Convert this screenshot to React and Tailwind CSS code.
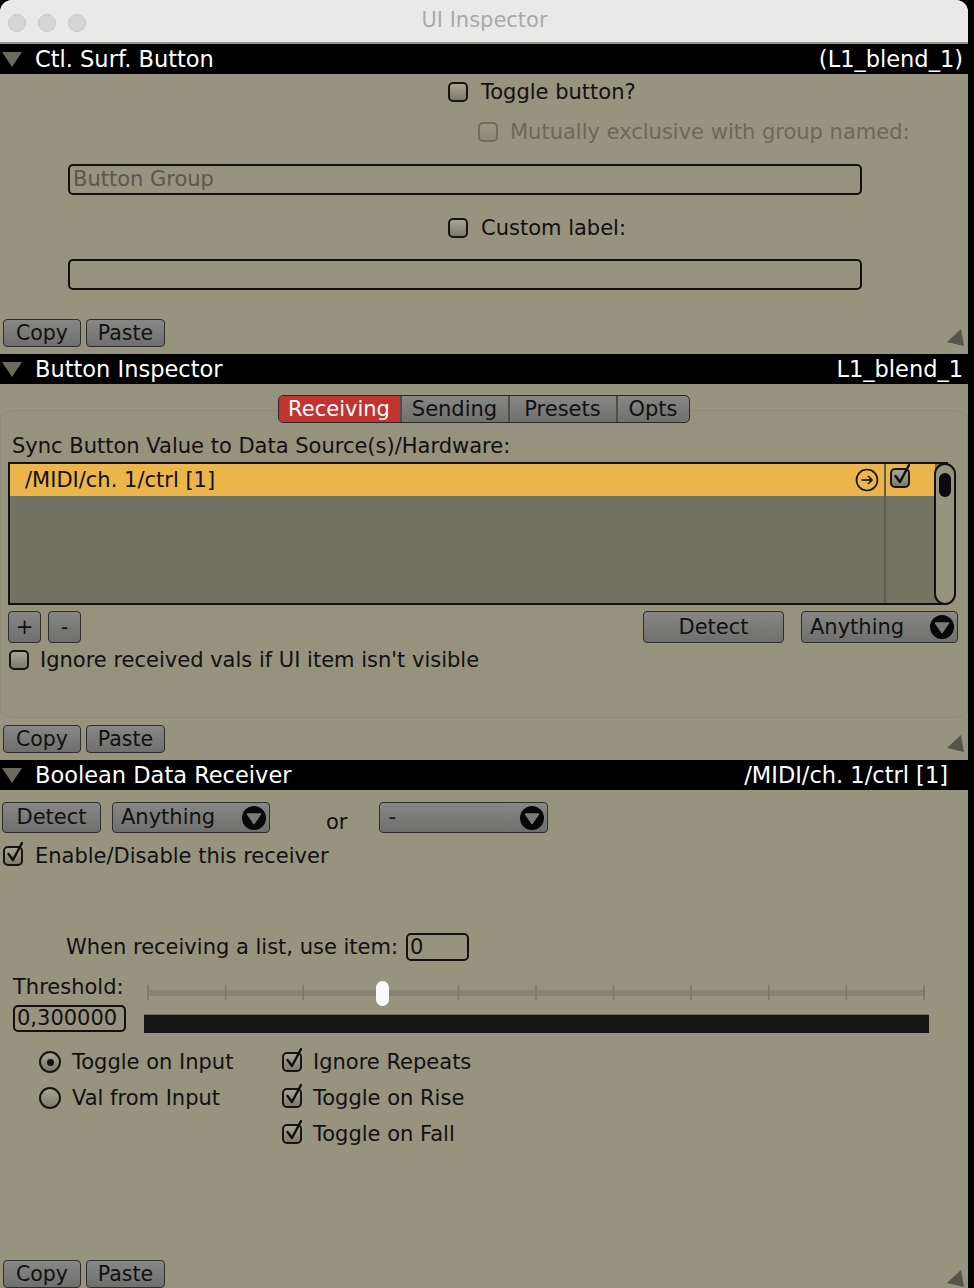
import React from "react";

const ticks = [0, 1, 2, 3, 4, 5, 6, 7, 8, 9, 10];

function Disclosure() {
  return (
    <svg width="20" height="16" viewBox="0 0 20 16" className="shrink-0">
      <polygon points="0,1 20,1 10,16" fill="#6b6a5d" />
    </svg>
  );
}

function Header({ title, right, last }) {
  return (
    <div className="flex h-[30px] shrink-0 items-center bg-black pl-[2px] text-[22.5px] leading-none text-white">
      <Disclosure />
      <span className="ml-[13px]">{title}</span>
      <span className={last ? "ml-auto pr-[20px]" : "ml-auto pr-[5px]"}>{right}</span>
    </div>
  );
}

function Grip() {
  return (
    <svg width="19" height="19" viewBox="0 0 19 19" className="shrink-0">
      <polygon points="15,1 1,14 18,18" fill="#56554a" />
    </svg>
  );
}

function Btn({ className = "", children, between }) {
  return (
    <div
      className={
        "flex items-center rounded-[4px] border-[1.5px] border-[#2e2e2c] bg-linear-to-b from-[#878785] to-[#6f6f6d] leading-none text-[#111] " +
        (between ? "justify-between " : "justify-center ") +
        className
      }
    >
      {children}
    </div>
  );
}

function CopyRow() {
  return (
    <div className="flex items-end justify-between pl-[3px] pr-[3px] text-[20.5px]">
      <div className="flex gap-[5px]">
        <Btn className="h-[28px] w-[78px]">Copy</Btn>
        <Btn className="h-[28px] w-[79px]">Paste</Btn>
      </div>
      <Grip />
    </div>
  );
}

function DropIcon() {
  return (
    <svg width="24" height="24" viewBox="0 0 24 24" className="shrink-0">
      <circle cx="12" cy="12" r="12" fill="#080808" />
      <polygon points="5.5,8 18.5,8 12,17.5" fill="#7a7a78" stroke="#7a7a78" strokeWidth="1.5" strokeLinejoin="round" />
    </svg>
  );
}

function Dropdown({ label, className = "" }) {
  return (
    <Btn between className={"pl-[8px] pr-[3px] " + className}>
      <span>{label}</span>
      <DropIcon />
    </Btn>
  );
}

function Check({ checked, disabled }) {
  return (
    <div
      className={
        "relative h-[20px] w-[20px] shrink-0 rounded-[5px] border-2 bg-linear-to-b " +
        (disabled ? "border-[#6e6c5e] from-[#9a9784] to-[#8b8876]" : "border-[#151515] from-[#a8a593] to-[#7e7b6a]")
      }
    >
      {checked && (
        <svg width="24" height="26" viewBox="0 0 24 26" className="absolute left-[-1px] top-[-7px] overflow-visible">
          <polyline points="4.5,13 9,19 18,2" fill="none" stroke="#0d0d0d" strokeWidth="2.4" strokeLinecap="round" strokeLinejoin="round" />
        </svg>
      )}
    </div>
  );
}

function Radio({ on }) {
  return (
    <div className="flex h-[22px] w-[22px] shrink-0 items-center justify-center rounded-full border-2 border-[#151515] bg-linear-to-b from-[#a8a593] to-[#7e7b6a]">
      {on && <div className="h-[7px] w-[7px] rounded-full bg-[#111]" />}
    </div>
  );
}

function CircleArrow() {
  return (
    <svg width="24" height="24" viewBox="0 0 24 24" className="shrink-0">
      <circle cx="12" cy="12" r="10.5" fill="none" stroke="#111" strokeWidth="1.6" />
      <line x1="6.5" y1="12" x2="17" y2="12" stroke="#111" strokeWidth="1.6" />
      <polyline points="13,8 17,12 13,16" fill="none" stroke="#111" strokeWidth="1.6" />
    </svg>
  );
}

function Slider() {
  return (
    <svg width="785" height="34" viewBox="0 0 785 34" className="block">
      <rect x="4" y="14" width="777" height="6" fill="#86836f" />
      {ticks.map((i) => (
        <rect key={i} x={4 + i * 77.6 - 0.75} y="9" width="1.5" height="15" fill="#7a7767" />
      ))}
      <rect x="232" y="5" width="13" height="25" rx="6.5" fill="#fafafa" />
    </svg>
  );
}

export default function App() {
  return (
    <div className="h-[1288px] w-[974px] overflow-hidden bg-black font-['DejaVu_Sans',Verdana,sans-serif] text-[#111]">
      <div className="flex h-full w-[968px] flex-col overflow-hidden rounded-t-[12px] bg-[#96937e]">
        {/* title bar */}
        <div className="relative flex h-[42px] shrink-0 items-center justify-center bg-[#e9e9e9]">
          <div className="absolute left-[8px] top-[14px] flex gap-[12px]">
            <div className="h-[18px] w-[18px] rounded-full border border-[#c6c6c6] bg-[#d5d5d5]" />
            <div className="h-[18px] w-[18px] rounded-full border border-[#c6c6c6] bg-[#d5d5d5]" />
            <div className="h-[18px] w-[18px] rounded-full border border-[#c6c6c6] bg-[#d5d5d5]" />
          </div>
          <span className="ml-[1px] text-[21px] text-[#a9a9a9]">UI Inspector</span>
        </div>
        <div className="h-[2px] shrink-0" />

        {/* Ctl. Surf. Button */}
        <Header title="Ctl. Surf. Button" right="(L1_blend_1)" />
        <div className="flex flex-col pt-[6px] text-[21px] leading-none">
          <div className="flex h-[24px] items-center gap-[13px] pl-[448px]">
            <Check />
            <span>Toggle button?</span>
          </div>
          <div className="mt-[16px] flex h-[24px] items-center gap-[12px] pl-[478px] text-[#6b6959]">
            <Check disabled />
            <span>Mutually exclusive with group named:</span>
          </div>
          <div className="ml-[68px] mt-[20px] flex h-[31px] w-[794px] items-center rounded-[5px] border-2 border-[#111] pl-[3px] text-[#5a584c]">
            Button Group
          </div>
          <div className="mt-[21px] flex h-[24px] items-center gap-[13px] pl-[448px]">
            <Check />
            <span>Custom label:</span>
          </div>
          <div className="ml-[68px] mt-[19px] h-[31px] w-[794px] rounded-[5px] border-2 border-[#111]" />
          <div className="mt-[29px]">
            <CopyRow />
          </div>
        </div>

        {/* Button Inspector */}
        <div className="mt-[7px]">
          <Header title="Button Inspector" right="L1_blend_1" />
        </div>
        <div className="relative z-10 mt-[11px] flex justify-center pr-[1px] text-[21px] leading-none">
          <div className="flex h-[28px] overflow-hidden rounded-[5px] border-[1.5px] border-[#2a2a28] bg-linear-to-b from-[#878785] to-[#6f6f6d]">
            <div className="flex w-[121px] items-center justify-center bg-[#c1342f] text-white">Receiving</div>
            <div className="flex w-[108px] items-center justify-center border-l-2 border-[#4d4d4b]">Sending</div>
            <div className="flex w-[108px] items-center justify-center border-l-2 border-[#4d4d4b]">Presets</div>
            <div className="flex w-[73px] items-center justify-center border-l-2 border-[#4d4d4b]">Opts</div>
          </div>
        </div>
        <div className="mt-[-13px] flex h-[308px] flex-col rounded-[10px] border border-[#8d8a76] bg-[#95927d] pt-[23px] text-[21px] leading-none">
          <div className="flex h-[24px] items-center pl-[11px]">Sync Button Value to Data Source(s)/Hardware:</div>
          <div className="relative ml-[7px] mt-[4px] h-[143px] w-[940px] border-2 border-[#111] bg-[#737161]">
            <div className="flex h-full">
              <div className="flex flex-1 flex-col">
                <div className="flex h-[32px] items-center justify-between bg-[#ecb54b] pl-[15px] pr-[5px]">
                  <span>/MIDI/ch. 1/ctrl [1]</span>
                  <CircleArrow />
                </div>
              </div>
              <div className="w-[51px] border-l-2 border-[#5f5d50] bg-[#757362]">
                <div className="flex h-[32px] items-start bg-[#ecb54b] pl-[4px] pt-[4px]">
                  <Check checked />
                </div>
              </div>
              <div className="w-[11px]" />
            </div>
            <div className="absolute right-[-10px] top-[-1px] flex h-[142px] w-[22px] justify-center rounded-full border-2 border-[#111] bg-[#96937e] pt-[8px]">
              <div className="h-[24px] w-[12px] rounded-full bg-[#0a0a0a]" />
            </div>
          </div>
          <div className="mt-[6px] flex h-[32px] items-center pl-[7px] pr-[9px]">
            <Btn className="h-[32px] w-[33px]">+</Btn>
            <Btn className="ml-[7px] h-[32px] w-[33px]">-</Btn>
            <Btn className="ml-auto h-[32px] w-[141px]">Detect</Btn>
            <Dropdown label="Anything" className="ml-[17px] h-[32px] w-[157px]" />
          </div>
          <div className="mt-[5px] flex h-[24px] items-center gap-[11px] pl-[8px]">
            <Check />
            <span>Ignore received vals if UI item isn't visible</span>
          </div>
        </div>
        <div className="mt-[7px]">
          <CopyRow />
        </div>

        {/* Boolean Data Receiver */}
        <div className="mt-[7px]">
          <Header title="Boolean Data Receiver" right="/MIDI/ch. 1/ctrl [1]" last />
        </div>
        <div className="flex flex-1 flex-col text-[21px] leading-none">
          <div className="mt-[12px] flex h-[31px] items-center pl-[2px]">
            <Btn className="h-[31px] w-[99px]">Detect</Btn>
            <Dropdown label="Anything" className="ml-[11px] h-[31px] w-[158px]" />
            <span className="ml-[56px] mt-[10px]">or</span>
            <Dropdown label="-" className="ml-[32px] h-[31px] w-[169px]" />
          </div>
          <div className="mt-[11px] flex h-[24px] items-center gap-[12px] pl-[3px]">
            <Check checked />
            <span>Enable/Disable this receiver</span>
          </div>
          <div className="mt-[65px] flex h-[28px] items-center pl-[66px]">
            <span className="w-[340px]">When receiving a list, use item:</span>
            <div className="flex h-[28px] w-[63px] items-center rounded-[5px] border-2 border-[#111] pl-[2px]">0</div>
          </div>
          <div className="mt-[14px] flex">
            <div className="flex w-[130px] flex-col pl-[13px]">
              <div className="flex h-[24px] items-center">Threshold:</div>
              <div className="mt-[6px] flex h-[27px] w-[113px] items-center overflow-hidden whitespace-nowrap rounded-[5px] border-2 border-[#111] pl-[2px]">
                0,300000
              </div>
            </div>
            <div className="ml-[14px] flex flex-col pt-[1px]">
              <Slider />
              <div className="mt-[4px] h-[19px] w-[785px] border-t border-[#6e6c5c] bg-[#151515]" />
            </div>
          </div>
          <div className="mt-[17px] flex">
            <div className="flex w-[282px] flex-col gap-[12px] pl-[39px]">
              <div className="flex h-[24px] items-center gap-[11px]">
                <Radio on />
                <span>Toggle on Input</span>
              </div>
              <div className="flex h-[24px] items-center gap-[11px]">
                <Radio />
                <span>Val from Input</span>
              </div>
            </div>
            <div className="flex flex-col gap-[12px]">
              <div className="flex h-[24px] items-center gap-[11px]">
                <Check checked />
                <span>Ignore Repeats</span>
              </div>
              <div className="flex h-[24px] items-center gap-[11px]">
                <Check checked />
                <span>Toggle on Rise</span>
              </div>
              <div className="flex h-[24px] items-center gap-[11px]">
                <Check checked />
                <span>Toggle on Fall</span>
              </div>
            </div>
          </div>
          <div className="mt-auto">
            <CopyRow />
          </div>
        </div>
      </div>
    </div>
  );
}
